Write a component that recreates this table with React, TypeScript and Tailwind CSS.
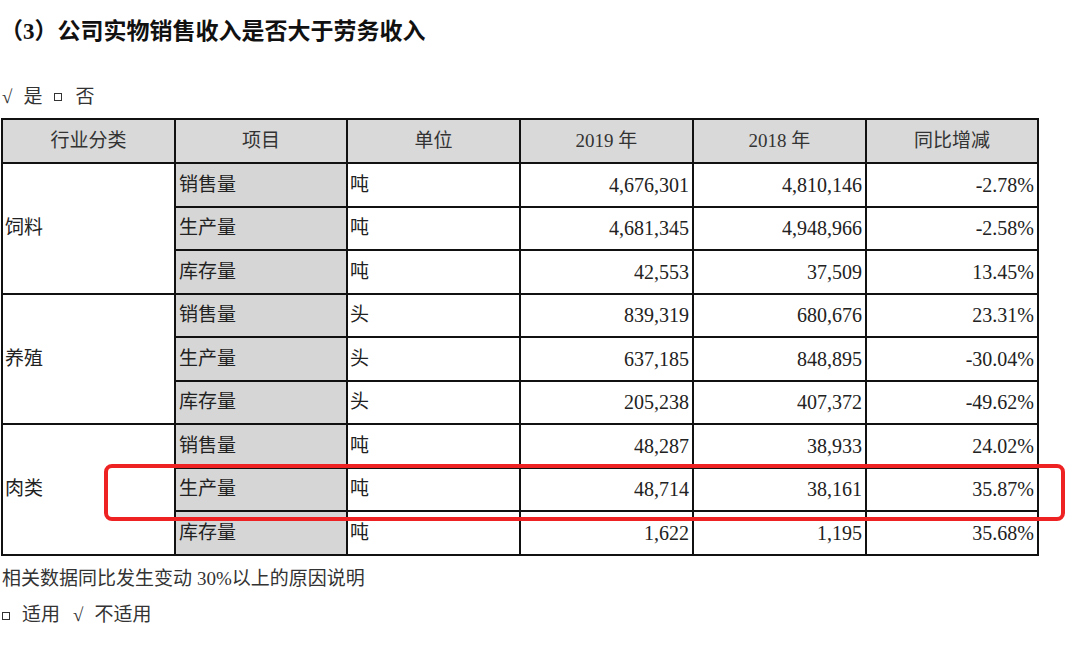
import React from "react";

type Row = { item: string; unit: string; y2019: string; y2018: string; change: string };
type Group = { name: string; rows: Row[] };

const groups: Group[] = [
  {
    name: "饲料",
    rows: [
      { item: "销售量", unit: "吨", y2019: "4,676,301", y2018: "4,810,146", change: "-2.78%" },
      { item: "生产量", unit: "吨", y2019: "4,681,345", y2018: "4,948,966", change: "-2.58%" },
      { item: "库存量", unit: "吨", y2019: "42,553", y2018: "37,509", change: "13.45%" },
    ],
  },
  {
    name: "养殖",
    rows: [
      { item: "销售量", unit: "头", y2019: "839,319", y2018: "680,676", change: "23.31%" },
      { item: "生产量", unit: "头", y2019: "637,185", y2018: "848,895", change: "-30.04%" },
      { item: "库存量", unit: "头", y2019: "205,238", y2018: "407,372", change: "-49.62%" },
    ],
  },
  {
    name: "肉类",
    rows: [
      { item: "销售量", unit: "吨", y2019: "48,287", y2018: "38,933", change: "24.02%" },
      { item: "生产量", unit: "吨", y2019: "48,714", y2018: "38,161", change: "35.87%" },
      { item: "库存量", unit: "吨", y2019: "1,622", y2018: "1,195", change: "35.68%" },
    ],
  },
];

const serif = { fontFamily: "'Liberation Serif', 'Noto Sans CJK SC', serif" };

function Box() {
  return <span className="inline-block w-[8px] h-[8px] border border-[#333]" />;
}

export default function App() {
  const cell = "border-2 border-[#111] p-0";
  const num = `${cell} text-right pr-[3px] text-[20px]`;

  return (
    <div className="relative w-[1080px] h-[659px] bg-white text-[#222] overflow-hidden" style={serif}>
      <div className="h-[64px] flex items-center text-[23px] font-bold text-[#111]">（3）公司实物销售收入是否大于劳务收入</div>

      {/* 是 / 否 */}
      <div className="mt-[22px] mb-[10px] h-[22px] text-[19px] pl-[2px] text-[#333] flex items-center">
        <span>√</span>
        <span className="ml-[11px]">是</span>
        <span className="ml-[12px] flex items-center"><Box /></span>
        <span className="ml-[13px]">否</span>
      </div>

      <table className="table-fixed border-collapse w-[1037px] ml-[1px]">
        <colgroup>
          <col className="w-[173px]" />
          <col className="w-[172px]" />
          <col className="w-[173px]" />
          <col className="w-[173px]" />
          <col className="w-[173px]" />
          <col className="w-[172px]" />
        </colgroup>
        <thead>
          <tr className="h-[44px] bg-[#d9d9d9] text-[#333] text-[19px]">
            <th className={`${cell} font-normal`}>行业分类</th>
            <th className={`${cell} font-normal`}>项目</th>
            <th className={`${cell} font-normal`}>单位</th>
            <th className={`${cell} font-normal`}>2019 年</th>
            <th className={`${cell} font-normal`}>2018 年</th>
            <th className={`${cell} font-normal`}>同比增减</th>
          </tr>
        </thead>
        <tbody>
          {groups.map((g) =>
            g.rows.map((r, i) => (
              <tr key={g.name + i} className="h-[43.5px]">
                {i === 0 && (
                  <td rowSpan={3} className={`${cell} text-left pl-[2px] text-[19px]`}>
                    {g.name}
                  </td>
                )}
                <td className={`${cell} bg-[#d6d6d6] text-left pl-[3px] text-[19px]`}>{r.item}</td>
                <td className={`${cell} text-left pl-[2px] text-[19px]`}>{r.unit}</td>
                <td className={num}>{r.y2019}</td>
                <td className={num}>{r.y2018}</td>
                <td className={num}>{r.change}</td>
              </tr>
            ))
          )}
        </tbody>
      </table>

      <div className="h-[48px] flex items-center pl-[2px] text-[19px] text-[#333]">
        相关数据同比发生变动<span className="ml-[5px]">30%</span>以上的原因说明
      </div>
      <div className="h-[24px] flex items-center pl-[2px] text-[19px] text-[#333]">
        <Box />
        <span className="ml-[12px]">适用</span>
        <span className="ml-[13px]">√</span>
        <span className="ml-[11px]">不适用</span>
      </div>

      {/* red highlight around 肉类 生产量 */}
      <div className="absolute left-[104px] top-[464px] w-[961px] h-[57px] border-[4px] border-[#ee2222] rounded-[8px] pointer-events-none" />
    </div>
  );
}
